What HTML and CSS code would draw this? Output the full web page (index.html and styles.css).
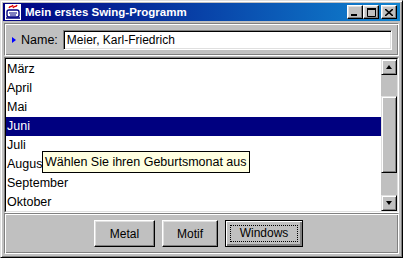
FILE: index.html
```html
<!DOCTYPE html>
<html lang="de">
<head>
  <meta charset="UTF-8" />
  <title>Mein erstes Swing-Programm</title>
  <link rel="stylesheet" href="styles.css">
</head>
<body>
  <div class="window">
    <div class="titlebar">
      <svg class="app-icon" width="16" height="16" viewBox="0 0 16 16">
        <rect x="0" y="0" width="16" height="16" fill="#fff"/>
        <path d="M4 4 C5 1 7 4 8 1 M8 4 C9 1 11 4 12 1" stroke="#e00000" stroke-width="1.3" fill="none"/>
        <rect x="2" y="6" width="12" height="7" rx="2" fill="#fff" stroke="#000080" stroke-width="1.4"/>
        <path d="M4 9 H12 M5 11 H11" stroke="#000080" stroke-width="1"/>
        <path d="M1 14 H15" stroke="#000080" stroke-width="1.5"/>
      </svg>
      <span class="title">Mein erstes Swing-Programm</span>
      <div class="title-buttons">
        <div class="tbtn">
          <svg width="8" height="7" viewBox="0 0 8 7"><rect x="0" y="5" width="6" height="2" fill="#000"/></svg>
        </div>
        <div class="tbtn">
          <svg width="9" height="9" viewBox="0 0 9 9"><path d="M0.5 1 H8.5 V8.5 H0.5 Z" fill="none" stroke="#000"/><rect x="0" y="0" width="9" height="2" fill="#000"/></svg>
        </div>
        <div class="tbtn close">
          <svg width="8" height="7" viewBox="0 0 8 7"><path d="M0 0 L8 7 M8 0 L0 7" stroke="#000" stroke-width="1.6"/></svg>
        </div>
      </div>
    </div>

    <div class="name-panel etched">
      <span class="arrow"></span>
      <span class="label">Name:</span>
      <div class="textfield">Meier, Karl-Friedrich</div>
    </div>

    <div class="scrollpane">
      <div class="scroll-inner">
        <ul class="month-list">
          <li>März</li>
          <li>April</li>
          <li>Mai</li>
          <li class="selected">Juni</li>
          <li>Juli</li>
          <li>August</li>
          <li>September</li>
          <li>Oktober</li>
        </ul>
        <div class="scrollbar">
          <div class="sb-btn"><span class="tri-up"></span></div>
          <div class="track"><div class="thumb"></div></div>
          <div class="sb-btn"><span class="tri-down"></span></div>
        </div>
      </div>
    </div>

    <div class="button-panel etched">
      <div class="btn btn-metal">Metal</div>
      <div class="btn btn-motif">Motif</div>
      <div class="btn btn-windows"><span class="focus">Windows</span></div>
    </div>

    <div class="tooltip">Wählen Sie ihren Geburtsmonat aus</div>
  </div>
</body>
</html>
```

FILE: styles.css
```css
* { margin: 0; padding: 0; box-sizing: border-box; }
body {
  font-family: "Liberation Sans", Arial, sans-serif;
  font-size: 12.5px;
  color: #000;
  background: #c0c0c0;
}
.window {
  position: relative;
  width: 403px;
  height: 258px;
  padding: 2px;
  background: #c0c0c0;
  border: 1px solid;
  border-color: #dfdfdf #000 #000 #dfdfdf;
  box-shadow: inset 1px 1px #fff, inset -1px -1px #808080;
}

/* title bar */
.titlebar {
  height: 18px;
  display: flex;
  align-items: center;
  padding: 0 3px 0 2px;
  background: linear-gradient(90deg, #000080, #1084d0);
}
.app-icon { flex: none; }
.title {
  margin-left: 4px;
  color: #fff;
  font-weight: bold;
  font-size: 11.5px;
  white-space: nowrap;
}
.title-buttons {
  margin-left: auto;
  display: flex;
}
.tbtn {
  width: 16px;
  height: 14px;
  display: flex;
  align-items: center;
  justify-content: center;
  background: #c0c0c0;
  border: 1px solid;
  border-color: #fff #000 #000 #fff;
  box-shadow: inset -1px -1px #808080, inset 1px 1px #dfdfdf;
}
.tbtn.close { margin-left: 2px; }

/* etched panels */
.etched {
  border: 1px solid;
  border-color: #808080 #fff #fff #808080;
  box-shadow: inset 1px 1px #fff, inset -1px -1px #808080;
}

.name-panel {
  margin: 2px 1px 0;
  height: 33px;
  display: flex;
  align-items: center;
  padding: 0 6px 0 7px;
}
.arrow {
  width: 0;
  height: 0;
  border-top: 3.5px solid transparent;
  border-bottom: 3.5px solid transparent;
  border-left: 4px solid #0000ff;
  margin-right: 5px;
}
.label { margin-right: 5px; }
.textfield {
  flex: 1;
  height: 20px;
  background: #fff;
  padding: 2px 3px;
  font-size: 12px;
  line-height: 14px;
  border: 1px solid;
  border-color: #808080 #fff #fff #808080;
  box-shadow: inset 1px 1px #000, inset -1px -1px #dfdfdf;
}

/* list with scrollbar */
.scrollpane {
  margin: 1px 1px 0;
  height: 156px;
  border: 1px solid;
  border-color: #808080 #fff #fff #808080;
}
.scroll-inner {
  height: 100%;
  display: flex;
  border: 1px solid;
  border-color: #000 #dfdfdf #dfdfdf #000;
}
.month-list {
  flex: 1;
  list-style: none;
  background: #fff;
  overflow: hidden;
  padding-top: 1px;
}
.month-list li {
  height: 19px;
  line-height: 19px;
  padding-left: 1px;
}
.month-list li.selected {
  background: #000080;
  color: #fff;
}
.scrollbar {
  width: 16px;
  display: flex;
  flex-direction: column;
  background: #c0c0c0;
}
.sb-btn, .thumb {
  background: #c0c0c0;
  border: 1px solid;
  border-color: #dfdfdf #000 #000 #dfdfdf;
  box-shadow: inset 1px 1px #fff, inset -1px -1px #808080;
}
.sb-btn {
  height: 16px;
  display: flex;
  align-items: center;
  justify-content: center;
}
.tri-up, .tri-down {
  width: 0;
  height: 0;
  border-left: 3.5px solid transparent;
  border-right: 3.5px solid transparent;
}
.tri-up { border-bottom: 4px solid #000; }
.tri-down { border-top: 4px solid #000; }
.track { flex: 1; }
.thumb {
  margin-top: 21px;
  height: 77px;
}

/* look and feel buttons */
.button-panel {
  margin: 0 1px;
  height: 41px;
  display: flex;
  align-items: center;
  justify-content: center;
  gap: 7px;
  padding-right: 6px;
}
.btn {
  height: 27px;
  display: flex;
  align-items: center;
  justify-content: center;
  font-size: 12px;
  background: #c0c0c0;
  border: 1px solid;
  border-color: #fff #000 #000 #fff;
  box-shadow: inset -1px -1px #808080, inset 1px 1px #dfdfdf;
}
.btn-metal { width: 61px; }
.btn-motif { width: 56px; }
.btn-windows {
  width: 78px;
  border-color: #000;
  box-shadow: inset 1px 1px #fff, inset -1px -1px #808080, inset -2px -2px #808080;
}
.focus {
  width: 68px;
  height: 17px;
  line-height: 15px;
  text-align: center;
  border: 1px dotted #000;
}

/* tooltip over the list */
.tooltip {
  position: absolute;
  left: 41px;
  top: 150px;
  width: 208px;
  height: 22px;
  padding: 0 2px;
  line-height: 20px;
  background: #ffffe1;
  border: 1px solid #000;
  white-space: nowrap;
}
```
